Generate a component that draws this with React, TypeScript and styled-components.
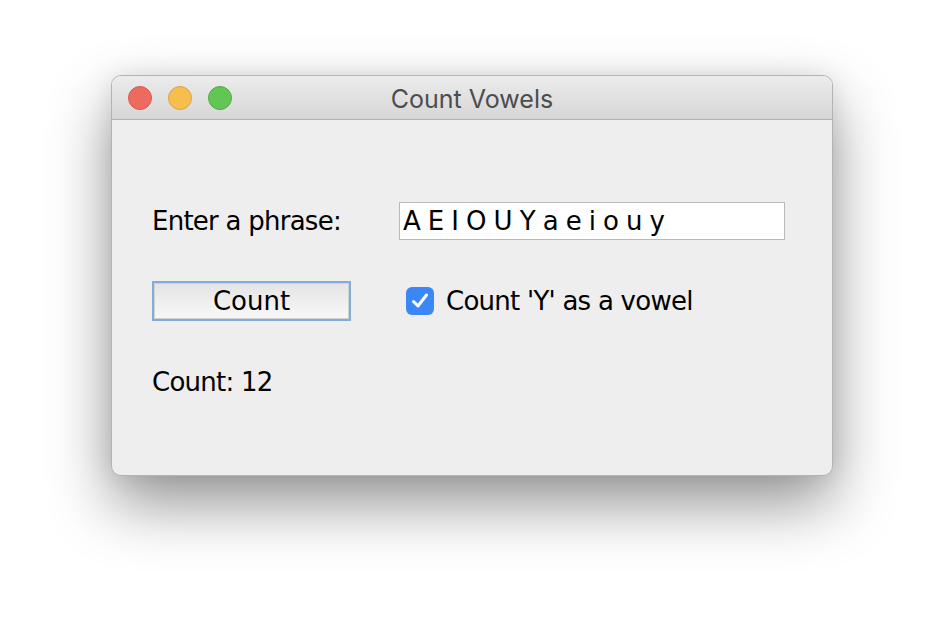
import { useState } from 'react'
import styled, { createGlobalStyle } from 'styled-components'

const GlobalStyle = createGlobalStyle`
  html, body {
    margin: 0;
    background: #ffffff;
  }
  body {
    width: 944px;
    height: 624px;
    overflow: hidden;
  }
`

const Desktop = styled.div`
  width: 944px;
  height: 624px;
  box-sizing: border-box;
  padding: 75px 0 0 111px;
`

const Window = styled.div`
  width: 722px;
  height: 401px;
  box-sizing: border-box;
  border-radius: 10px;
  background: #eeeeee;
  border: 1px solid #b3b3b3;
  box-shadow: 0 28px 62px rgba(0, 0, 0, 0.42), 0 0 24px rgba(0, 0, 0, 0.08);
  overflow: hidden;
  display: flex;
  flex-direction: column;
`

const TitleBar = styled.div`
  height: 43px;
  flex: none;
  position: relative;
  display: flex;
  align-items: center;
  justify-content: center;
  background: linear-gradient(#ececec, #d6d6d6);
  border-bottom: 1px solid #b1b1b1;
`

const Lights = styled.div`
  position: absolute;
  left: 16px;
  top: 10px;
  display: flex;
  gap: 16px;
`

const Light = styled.span<{ $fill: string; $edge: string }>`
  width: 24px;
  height: 24px;
  box-sizing: border-box;
  border-radius: 50%;
  background: ${({ $fill }) => $fill};
  border: 1px solid ${({ $edge }) => $edge};
`

const Title = styled.div`
  font-family: Inter, 'Liberation Sans', sans-serif;
  font-size: 25px;
  color: #4d4d4d;
  margin-top: 2px;
`

const Body = styled.div`
  flex: 1;
  padding: 82px 0 0 40px;
  display: grid;
  grid-template-columns: 199px 386px;
  grid-template-rows: 38px 40px 40px;
  column-gap: 48px;
  row-gap: 41px;
  align-items: center;
  font-family: 'DejaVu Sans', sans-serif;
  font-size: 26px;
  letter-spacing: -0.75px;
  color: #000;
`

const Label = styled.div`
  white-space: nowrap;
`

const Field = styled.input`
  width: 386px;
  height: 38px;
  box-sizing: border-box;
  margin: 0;
  padding: 0 0 0 3px;
  border: 1px solid #bababa;
  background: #ffffff;
  font: inherit;
  letter-spacing: -0.6px;
  color: #000;
  outline: none;
`

const Button = styled.button`
  width: 199px;
  height: 40px;
  box-sizing: border-box;
  margin: 0;
  padding: 0;
  border: 2px solid #85abd9;
  box-shadow: inset 0 0 0 1px #d2d2d2;
  background: linear-gradient(#e4e4e4, #f8f8f8);
  font: inherit;
  color: #000;
`

const CheckRow = styled.label`
  display: flex;
  align-items: center;
  gap: 12px;
  padding-left: 7px;
  white-space: nowrap;
`

const Box = styled.span`
  width: 28px;
  height: 28px;
  border-radius: 6px;
  background: #3b87f7;
  display: flex;
  align-items: center;
  justify-content: center;
`

export default function App() {
  const [phrase, setPhrase] = useState('A E I O U Y a e i o u y')
  const [countY, setCountY] = useState(true)
  const [count, setCount] = useState(12)

  const run = () => {
    const re = countY ? /[aeiouy]/gi : /[aeiou]/gi
    setCount((phrase.match(re) || []).length)
  }

  return (
    <>
      <GlobalStyle />
      <Desktop>
        <Window>
          <TitleBar>
            <Lights>
              <Light $fill="#ee6a5e" $edge="#d65a4f" />
              <Light $fill="#f6be4f" $edge="#dba440" />
              <Light $fill="#62c655" $edge="#4fad43" />
            </Lights>
            <Title>Count Vowels</Title>
          </TitleBar>
          <Body>
            <Label>Enter a phrase:</Label>
            <Field value={phrase} onChange={(e) => setPhrase(e.target.value)} />
            <Button onClick={run}>Count</Button>
            <CheckRow onClick={() => setCountY(!countY)}>
              <Box>
                {countY && (
                  <svg width="20" height="20" viewBox="0 0 20 20">
                    <path d="M3.5 10.5 L8 15 L16.5 4" fill="none" stroke="#fff" strokeWidth="3" strokeLinecap="round" strokeLinejoin="round" />
                  </svg>
                )}
              </Box>
              Count 'Y' as a vowel
            </CheckRow>
            <Label>Count: {count}</Label>
          </Body>
        </Window>
      </Desktop>
    </>
  )
}
